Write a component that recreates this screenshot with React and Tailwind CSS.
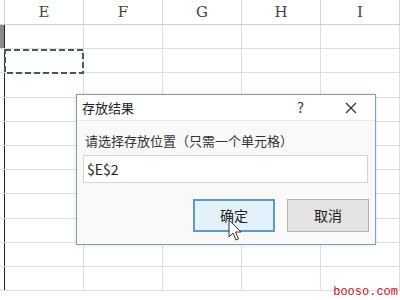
const cols = ['E', 'F', 'G', 'H', 'I']
const rows = Array.from({ length: 11 })

function Cursor() {
  return (
    <svg width="16" height="24" viewBox="0 0 16 24" className="absolute left-[228px] top-[219px]">
      <path d="M1 1 L1 18 L5 14 L8 21 L10.5 20 L7.5 13 L13 13 Z" fill="#fff" stroke="#333" strokeWidth="1" strokeLinejoin="round" />
    </svg>
  )
}

function Dialog() {
  return (
    <div className="absolute left-[76px] top-[94px] w-[300px] h-[151px] border border-[#7f9fb3] bg-[#f9f9f9] flex flex-col shadow-[0_0_3px_rgba(0,0,0,0.15)]">
      <div className="h-[26px] bg-white flex items-center pl-[5px] border-b border-[#ececec]">
        <span className="text-[13px] text-[#222] leading-none">存放结果</span>
        <span className="ml-auto text-[14px] text-[#333] mr-[41px]">?</span>
        <svg width="12" height="12" viewBox="0 0 12 12" className="mr-[18px]">
          <path d="M1 1 L11 11 M11 1 L1 11" stroke="#333" strokeWidth="1.3" />
        </svg>
      </div>
      <div className="px-[6px] pt-[13px] flex flex-col">
        <div className="text-[13px] text-[#333] leading-none pl-[2px]">请选择存放位置（只需一个单元格）</div>
        <div className="mt-[8px] h-[28px] w-[285px] border border-[#d4d4d4] bg-white flex items-center pl-[3px] text-[14px] text-[#222]">$E$2</div>
        <div className="mt-[16px] flex gap-[12px] ml-[110px]">
          <div className="w-[82px] h-[33px] border-2 border-[#5a9cc7] bg-[#e3f1fa] flex items-center justify-center text-[14px] text-[#222]">确定</div>
          <div className="w-[82px] h-[33px] border border-[#b5b5b5] bg-[#e3e3e3] flex items-center justify-center text-[14px] text-[#222]">取消</div>
        </div>
      </div>
    </div>
  )
}

export default function App() {
  return (
    <div className="relative w-[400px] h-[300px] overflow-hidden bg-white font-['Noto_Sans_CJK_SC',sans-serif]">
      <div className="flex h-[25px] border-b border-[#cfcfcf]">
        <div className="w-[5px] border-r border-[#cfcfcf]" />
        {cols.map((c) => (
          <div key={c} className="w-[79px] shrink-0 border-r border-[#d6d6d6] flex items-center justify-center text-[15px] text-[#444] font-['DejaVu_Serif',serif]">{c}</div>
        ))}
      </div>
      {rows.map((_, i) => (
        <div key={i} className="flex h-[24.2px] border-b border-[#dedede]">
          <div className={`w-[5px] shrink-0 border-r-[1.5px] border-[#222] ${i === 0 ? 'bg-[#8a8a8a]' : 'bg-white'}`} />
          {cols.map((c) => (
            <div key={c} className="w-[79px] shrink-0 border-r border-[#dedede]" />
          ))}
        </div>
      ))}
      <svg width="82" height="27" className="absolute left-[3px] top-[48px]">
        <rect x="2" y="2" width="78" height="23" fill="none" stroke="#3f5f55" strokeWidth="2" strokeDasharray="6 3" />
      </svg>
      <Dialog />
      <Cursor />
      <div className="absolute right-[2px] bottom-[2px] text-[12px] leading-none text-[#c8102e] font-['Liberation_Mono',monospace]">booso.com</div>
    </div>
  )
}
